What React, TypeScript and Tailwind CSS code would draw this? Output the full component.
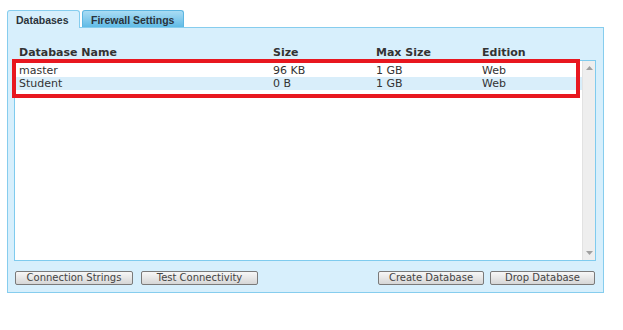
import React from 'react';

interface DbRow {
  name: string;
  size: string;
  maxSize: string;
  edition: string;
}

const rows: DbRow[] = [
  { name: 'master', size: '96 KB', maxSize: '1 GB', edition: 'Web' },
  { name: 'Student', size: '0 B', maxSize: '1 GB', edition: 'Web' },
];

const cols = 'grid grid-cols-[254px_103px_106px_1fr]';

function PortalButton({ label, width }: { label: string; width: string }) {
  return (
    <button
      className={`${width} h-[14px] flex items-center justify-center rounded-[2px] border border-[#7a7a7a] bg-gradient-to-b from-[#f7f7f7] to-[#d6d6d6] text-[10px] leading-[12px] text-[#444]`}
    >
      {label}
    </button>
  );
}

function App() {
  return (
    <div
      className="w-[623px] h-[330px] bg-white pl-[7px] pt-[10px]"
      style={{ fontFamily: '"DejaVu Sans", Verdana, sans-serif' }}
    >
      {/* Tabs */}
      <div className="flex items-end gap-[2px] h-[17px]">
        <div
          className="relative z-10 w-[73px] h-[18px] mb-[-1px] rounded-t-[3px] border border-b-0 border-[#86cdee] bg-[#d7effc] pl-[8px] pt-[2px] text-[10.5px] font-bold text-[#2a333b]"
          style={{ fontFamily: '"Liberation Sans", Arial, sans-serif' }}
        >
          Databases
        </div>
        <div
          className="w-[102px] h-[17px] rounded-t-[3px] border border-b-0 border-[#5db6e1] bg-gradient-to-b from-[#a9dcf4] to-[#5fbbe6] pl-[8px] pt-[2px] text-[10.5px] font-bold text-[#2a333b]"
          style={{ fontFamily: '"Liberation Sans", Arial, sans-serif' }}
        >
          Firewall Settings
        </div>
      </div>

      {/* Panel */}
      <div className="relative w-[597px] h-[266px] border border-[#86cdee] bg-[#d7effc] pt-[18px] pl-[6px] pr-[7px] flex flex-col">
        <div className={`${cols} h-[13px] pl-[5px] text-[11px] leading-[13px] font-bold text-[#333]`}>
          <div>Database Name</div>
          <div>Size</div>
          <div>Max Size</div>
          <div>Edition</div>
        </div>

        <div className="mt-[1px] h-[201px] border border-[#7fcbee] bg-white flex">
          <div className="flex-1 pt-[3px]">
            {rows.map((r, i) => (
              <div
                key={r.name}
                className={`${cols} h-[13px] pl-[4px] text-[11px] leading-[13px] text-[#333] ${
                  i % 2 === 1 ? 'bg-[#d9eefa]' : 'bg-white'
                }`}
              >
                <div>{r.name}</div>
                <div>{r.size}</div>
                <div>{r.maxSize}</div>
                <div>{r.edition}</div>
              </div>
            ))}
          </div>
          {/* Scrollbar */}
          <div className="w-[13px] bg-[#eeeeee] border-l border-[#e2e2e2] flex flex-col justify-between items-center py-[5px]">
            <svg width="7" height="4" viewBox="0 0 7 4">
              <path d="M0 4 L3.5 0 L7 4 Z" fill="#a0a0a0" />
            </svg>
            <svg width="7" height="4" viewBox="0 0 7 4">
              <path d="M0 0 L3.5 4 L7 0 Z" fill="#a0a0a0" />
            </svg>
          </div>
        </div>

        <div className="mt-[10px] flex items-center pl-[1px] pr-[1px]">
          <div className="flex gap-[8px]">
            <PortalButton label="Connection Strings" width="w-[118px]" />
            <PortalButton label="Test Connectivity" width="w-[117px]" />
          </div>
          <div className="ml-auto flex gap-[6px]">
            <PortalButton label="Create Database" width="w-[106px]" />
            <PortalButton label="Drop Database" width="w-[105px]" />
          </div>
        </div>

        {/* Red annotation box */}
        <div className="absolute left-[4px] top-[31px] w-[568px] h-[39px] border-[4px] border-[#e8171f] pointer-events-none" />
      </div>
    </div>
  );
}

export default App;
